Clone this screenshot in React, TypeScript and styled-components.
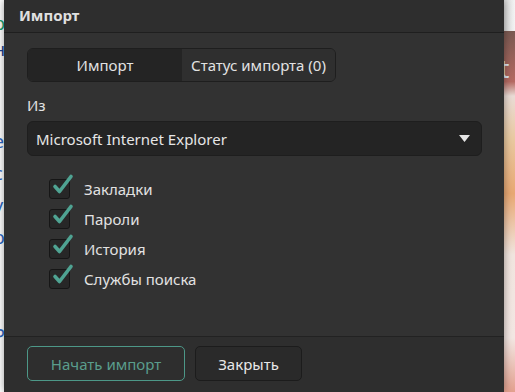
import { FC } from "react"
import styled, { createGlobalStyle } from "styled-components"

const GlobalStyle = createGlobalStyle`
  html, body {
    margin: 0;
    padding: 0;
    width: 515px;
    height: 392px;
    overflow: hidden;
    background: #ffffff;
  }
  * {
    box-sizing: border-box;
  }
`

const options = ["Закладки", "Пароли", "История", "Службы поиска"]

// text of the page behind the dialog that peeks out on the left
const fragments = [
  { t: "р", c: "#1aa36f", top: 14 },
  { t: "н", c: "#1c3f8f", top: 40 },
  { t: "е", c: "#2a66c4", top: 132 },
  { t: "с", c: "#2a66c4", top: 164 },
  { t: "у", c: "#2a66c4", top: 196 },
  { t: "о", c: "#2a66c4", top: 228 },
  { t: "Р", c: "#2a66c4", top: 326 },
]

const Check: FC = () => (
  <CheckBox>
    <svg width="26" height="26" viewBox="0 0 26 26">
      <path
        d="M6 14.5 L10.5 19.5 L22 4.5"
        fill="none"
        stroke="#4fa392"
        strokeWidth="3.6"
        strokeLinecap="round"
        strokeLinejoin="round"
      />
    </svg>
  </CheckBox>
)

const App: FC = () => {
  return (
    <Page>
      <GlobalStyle />
      <LeftPage>
        {fragments.map((f) => (
          <Frag key={f.top} color={f.c} top={f.top}>{f.t}</Frag>
        ))}
      </LeftPage>
      <Dialog>
        <Header>Импорт</Header>
        <Body>
          <Tabs>
            <Tab active>Импорт</Tab>
            <Tab>Статус импорта (0)</Tab>
          </Tabs>
          <Label>Из</Label>
          <Select>
            <span>Microsoft Internet Explorer</span>
            <svg width="11" height="7" viewBox="0 0 11 7">
              <path d="M0 0 H11 L5.5 7 Z" fill="#e6e6e6" />
            </svg>
          </Select>
          <CheckList>
            {options.map((o) => (
              <CheckRow key={o}>
                <Check />
                <span>{o}</span>
              </CheckRow>
            ))}
          </CheckList>
        </Body>
        <Footer>
          <Button primary>Начать импорт</Button>
          <Button>Закрыть</Button>
        </Footer>
      </Dialog>
      <RightPage>
        <Shade />
        <Picture>
          <BigLetter>t</BigLetter>
        </Picture>
      </RightPage>
    </Page>
  )
}

const Page = styled.div`
  display: flex;
  width: 515px;
  height: 392px;
  font-family: "Noto Sans", "Open Sans", sans-serif;
`

const LeftPage = styled.div`
  position: relative;
  width: 4px;
  height: 100%;
  background: #ffffff;
  overflow: hidden;
`

const Frag = styled.span<{ color: string; top: number }>`
  position: absolute;
  left: -6px;
  top: ${(p) => p.top}px;
  font-size: 18px;
  line-height: 18px;
  color: ${(p) => p.color};
`

const Dialog = styled.div`
  width: 500px;
  height: 100%;
  display: flex;
  flex-direction: column;
  background: #323232;
  color: #e4e4e4;
  box-shadow: 0 0 8px rgba(0, 0, 0, 0.4);
  z-index: 1;
`

const Header = styled.div`
  height: 33px;
  padding: 4px 0 0 15px;
  font-size: 15px;
  font-weight: 700;
  line-height: 22px;
  color: #e0e0e0;
  background: #2e2e2e;
  border-bottom: 1px solid #1f1f1f;
`

const Body = styled.div`
  flex: 1;
  padding: 15px 23px 0;
  display: flex;
  flex-direction: column;
`

const Tabs = styled.div`
  display: flex;
  width: 309px;
  height: 34px;
  border: 1px solid #1e1e1e;
  border-radius: 6px;
  overflow: hidden;
`

const Tab = styled.div<{ active?: boolean }>`
  width: ${(p) => (p.active ? "154px" : "auto")};
  flex: ${(p) => (p.active ? "none" : "1")};
  display: flex;
  align-items: center;
  justify-content: center;
  font-size: 15px;
  color: #e2e2e2;
  background: ${(p) => (p.active ? "#242424" : "#2f2f2f")};
`

const Label = styled.div`
  margin-top: 13px;
  font-size: 15px;
  line-height: 20px;
  color: #e2e2e2;
`

const Select = styled.div`
  margin-top: 6px;
  width: 455px;
  height: 35px;
  padding: 0 11px 0 8px;
  display: flex;
  align-items: center;
  justify-content: space-between;
  font-size: 15px;
  color: #e6e6e6;
  background: #242424;
  border: 1px solid #1e1e1e;
  border-radius: 6px;
`

const CheckList = styled.div`
  margin-top: 23px;
  padding-left: 22px;
  display: flex;
  flex-direction: column;
  gap: 10px;
`

const CheckRow = styled.div`
  display: flex;
  align-items: center;
  gap: 14px;
  height: 20px;
  font-size: 15px;
  color: #e2e2e2;
`

const CheckBox = styled.div`
  position: relative;
  width: 21px;
  height: 20px;
  background: #272727;
  border: 1px solid #161616;
  border-radius: 3px;

  svg {
    position: absolute;
    left: -1px;
    top: -8px;
  }
`

const Footer = styled.div`
  height: 56px;
  padding: 9px 23px 0;
  display: flex;
  gap: 10px;
  background: #2e2e2e;
  border-top: 1px solid #222222;
`

const Button = styled.div<{ primary?: boolean }>`
  width: ${(p) => (p.primary ? "158px" : "107px")};
  height: 35px;
  display: flex;
  align-items: center;
  justify-content: center;
  font-size: 15px;
  border-radius: 5px;
  color: ${(p) => (p.primary ? "#5a9d8c" : "#e8e8e8")};
  background: ${(p) => (p.primary ? "#2e2e2e" : "#2a2a2a")};
  border: 1px solid ${(p) => (p.primary ? "#4d9888" : "#1c1c1c")};
`

const RightPage = styled.div`
  flex: 1;
  height: 100%;
  display: flex;
  flex-direction: column;
  overflow: hidden;
`

const Shade = styled.div`
  height: 31px;
  background: linear-gradient(90deg, #d8d8d8, #f4f4f4);
`

const Picture = styled.div`
  flex: 1;
  position: relative;
  background: linear-gradient(180deg, #7a5a52 0%, #b56a62 14%, #eadcd6 18%, #e9c9a0 30%, #e8a873 45%, #f1e5df 62%, #f3e7e3 85%, #e3a08e 100%);
`

const BigLetter = styled.span`
  position: absolute;
  left: -4px;
  top: 24px;
  font-size: 26px;
  line-height: 26px;
  color: #dfe8f2;
`

export default App
